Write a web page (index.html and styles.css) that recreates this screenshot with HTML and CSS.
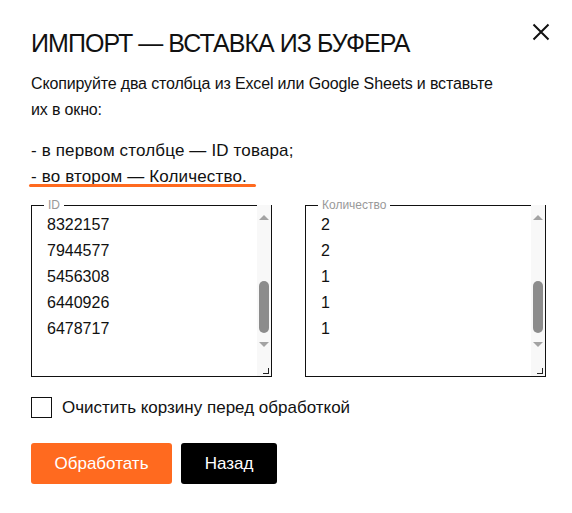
FILE: index.html
```html
<!DOCTYPE html>
<html lang="ru">
<head>
<meta charset="utf-8">
<title>Импорт</title>
<link rel="stylesheet" href="styles.css">
</head>
<body>
<div class="dialog">
  <button class="close" aria-label="Закрыть">
    <svg width="18" height="18" viewBox="0 0 18 18"><path d="M1.5 1.5 L16.5 16.5 M16.5 1.5 L1.5 16.5" stroke="#111" stroke-width="2" fill="none"/></svg>
  </button>
  <h1 class="title">ИМПОРТ — ВСТАВКА ИЗ БУФЕРА</h1>
  <p class="intro">Скопируйте два столбца из Excel или Google Sheets и вставьте их в окно:</p>
  <p class="rules">- в первом столбце — ID товара;<br><span class="mark">- во втором — Количество.</span></p>
  <div class="cols">
    <fieldset class="box">
      <legend>ID</legend>
      <div class="area">
        <div class="lines">
          <div>8322157</div><div>7944577</div><div>5456308</div><div>6440926</div><div>6478717</div>
        </div>
        <div class="sb">
          <span class="arr up"></span>
          <span class="thumb"></span>
          <span class="arr down"></span>
          <span class="grip"></span>
        </div>
      </div>
    </fieldset>
    <fieldset class="box">
      <legend>Количество</legend>
      <div class="area">
        <div class="lines">
          <div>2</div><div>2</div><div>1</div><div>1</div><div>1</div>
        </div>
        <div class="sb">
          <span class="arr up"></span>
          <span class="thumb"></span>
          <span class="arr down"></span>
          <span class="grip"></span>
        </div>
      </div>
    </fieldset>
  </div>
  <label class="check"><span class="cb"></span>Очистить корзину перед обработкой</label>
  <div class="actions">
    <button class="btn btn-primary">Обработать</button>
    <button class="btn btn-dark">Назад</button>
  </div>
</div>
</body>
</html>
```
FILE: styles.css
```css
* { box-sizing: border-box; }
html, body { margin: 0; padding: 0; background: #fff; }
body { font-family: "Liberation Sans", Arial, sans-serif; color: #111; }
.dialog { position: relative; width: 572px; height: 513px; padding: 27px 26px 0 31px; }
.close { position: absolute; top: 22px; right: 21px; width: 20px; height: 20px; padding: 0; border: 0; background: none; display: flex; align-items: center; justify-content: center; }
.title { margin: 0; font-size: 25px; line-height: 32px; font-weight: 400; letter-spacing: -0.95px; color: #111; }
.intro { margin: 12px 0 0; font-size: 16px; line-height: 26px; letter-spacing: -0.15px; max-width: 470px; }
.rules { margin: 15px 0 0; font-size: 17px; line-height: 26px; letter-spacing: 0.15px; }
.mark { position: relative; display: inline-block; }
.mark::after { content: ""; position: absolute; left: -2px; right: -9px; bottom: 3px; height: 3px; border-radius: 2px; background: #ff6a1f; }
.cols { display: flex; gap: 33px; margin-top: 9px; }
.box { margin: 0; padding: 0 0 0 12px; border: 1px solid #111; flex: 1; min-width: 0; height: 178px; }
legend { font-size: 12px; line-height: 12px; color: #999; padding: 0 4px; }
.area { display: flex; height: 166px; }
.lines { flex: 1; padding: 1px 0 0 3px; font-size: 16px; line-height: 26px; }
.sb { width: 14px; margin-top: -6px; height: 171px; background: #f8f8f8; display: flex; flex-direction: column; align-items: center; position: relative; }
.arr { width: 0; height: 0; border-left: 5px solid transparent; border-right: 5px solid transparent; }
.up { margin-top: 10px; border-bottom: 5px solid #a3a3a3; }
.thumb { margin-top: 61px; width: 10px; height: 52px; border-radius: 5px; background: #8c8c8c; }
.down { margin-top: 9px; border-top: 5px solid #a3a3a3; }
.grip { position: absolute; right: 2px; bottom: 2px; width: 6px; height: 6px; border-right: 1.5px solid #222; border-bottom: 1.5px solid #222; }
.check { display: flex; align-items: center; gap: 10px; margin-top: 20px; font-size: 17px; line-height: 21px; color: #111; }
.cb { width: 21px; height: 21px; border: 1px solid #111; background: #fff; }
.actions { display: flex; gap: 9px; margin-top: 25px; }
.btn { height: 41px; border: 0; border-radius: 3px; font-family: "Liberation Sans", Arial, sans-serif; font-size: 17px; color: #fff; padding: 0; }
.btn-primary { width: 141px; background: #ff6a1f; }
.btn-dark { width: 96px; background: #000; }
```
